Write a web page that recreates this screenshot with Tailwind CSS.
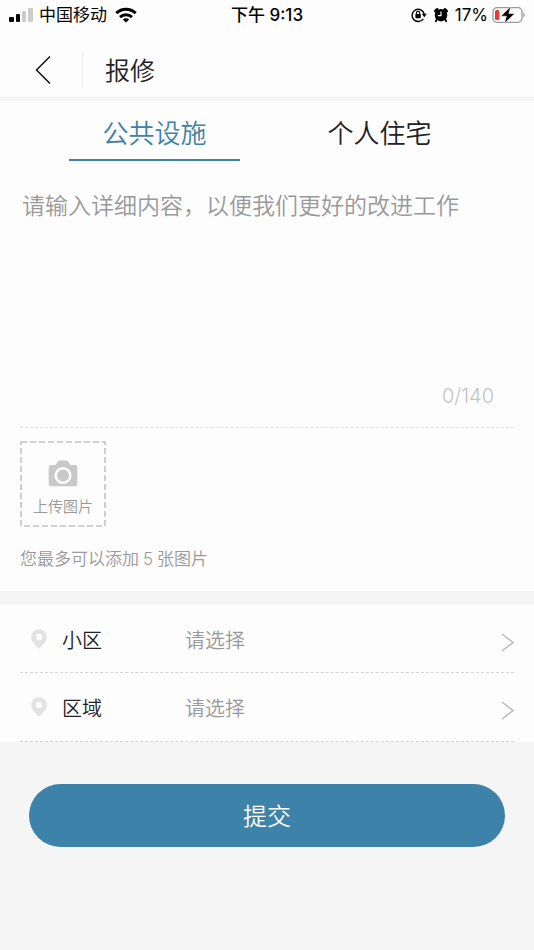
<!DOCTYPE html>
<html lang="zh-CN">
<head>
    <meta charset="UTF-8">
    <meta name="viewport" content="width=device-width, initial-scale=1.0">
    <script src="https://cdn.jsdelivr.net/npm/@tailwindcss/browser@4"></script>
    <title>报修</title>
</head>
<body class="min-h-screen bg-[#f5f5f5] font-['Inter','Noto_Sans_CJK_SC',sans-serif] font-[350] text-[#222]">

    <!-- status bar -->
    <div class="grid grid-cols-[1fr_auto_1fr] items-center h-[30px] px-[9px] bg-[#fdfdfd] text-[17px] leading-[30px] font-normal text-black">
        <div class="flex items-center">
            <svg class="w-6 h-4 shrink-0" viewBox="0 0 24 16">
                <rect x="0" y="10" width="5" height="5" rx="1" fill="#000"/>
                <rect x="7" y="7" width="4" height="8" rx="1" fill="#000"/>
                <rect x="13" y="4" width="4" height="11" rx="1" fill="#ccc"/>
                <rect x="19" y="1" width="5" height="14" rx="1" fill="#ccc"/>
            </svg>
            <span class="ml-1.5">中国移动</span>
            <svg class="w-[22px] h-4 ml-2 shrink-0" viewBox="0 0 22 16" fill="none" stroke="#000" stroke-width="3">
                <path d="M1.3 6.2C6.8.9 15.2.9 20.7 6.2"/>
                <path d="M5 10.1C8.4 6.9 13.6 6.9 17 10.1"/>
                <path d="M11 15.6 7.8 12.5C9.6 10.9 12.4 10.9 14.2 12.5Z" fill="#000" stroke="none"/>
            </svg>
        </div>
        <span class="font-medium">下午 9:13</span>
        <div class="flex items-center justify-end">
            <svg class="w-4 h-4 shrink-0" viewBox="0 0 16 16">
                <path d="M12.3 11.8A6.1 6.1 0 1 1 13.2 7" fill="none" stroke="#000" stroke-width="1.4"/>
                <path d="M10.8 6.8H15.8L13.3 10.2Z"/>
                <rect x="4.4" y="7" width="5.4" height="4.2" rx=".6"/>
                <path d="M5.5 7.4V6A1.6 1.6 0 0 1 8.7 6V7.4" fill="none" stroke="#000" stroke-width="1.1"/>
            </svg>
            <svg class="w-4 h-4 ml-1.5 shrink-0" viewBox="0 0 16 16">
                <circle cx="8" cy="8.2" r="6.2"/>
                <path d="M2.4 4 4.2 2.4M13.6 4 11.8 2.4" stroke="#000" stroke-width="2.8" stroke-linecap="round"/>
                <path d="M3.8 12.5 2.8 14.2M12.2 12.5 13.2 14.2" stroke="#000" stroke-width="1.8" stroke-linecap="round"/>
                <path d="M8 4.6V8.6H4.8" fill="none" stroke="#fff" stroke-width="1.2"/>
            </svg>
            <span class="ml-1.5">17%</span>
            <svg class="w-[33px] h-[18px] ml-1 shrink-0" viewBox="0 0 33 18">
                <rect x="1" y="1.7" width="29" height="14.6" rx="4" fill="#fff" stroke="#999" stroke-width="1.3"/>
                <path d="M31.4 6.5C33.2 7 33.2 11 31.4 11.5Z" fill="#999"/>
                <rect x="3" y="4" width="4.4" height="10" rx="1.6" fill="#e8392f"/>
                <path d="M18.8.6 8.8 10.2H14.4L12.4 17.4 22.8 7.6H16.8Z" stroke="#fff" stroke-width=".6"/>
            </svg>
        </div>
    </div>

    <header class="flex items-center h-[67px] pt-3 bg-[#fdfdfd]">
        <button class="flex w-[82px] justify-center pl-1" type="button" aria-label="返回">
            <svg class="w-4 h-7" viewBox="0 0 16 28" fill="none" stroke="#111" stroke-width="1.5">
                <path d="M15 .5 1.5 14 15 27.5"/>
            </svg>
        </button>
        <div class="w-px h-9 bg-[#ececec]"></div>
        <h1 class="pt-0.5 ml-[22px] text-[25px] leading-9">报修</h1>
    </header>

    <main class="border-t-4 border-[#f5f5f5]">
        <form id="repairForm">
            <section class="bg-[#fdfdfd] pb-5">
                <div class="grid grid-cols-2 px-[42px]" role="tablist">
                    <button class="tab mx-[27px] h-[60px] pt-1.5 border-b-2 border-[#3d82a8] text-[26px] text-[#3d82a8]" type="button" role="tab" aria-selected="true">公共设施</button>
                    <button class="tab mx-[27px] h-[60px] pt-1.5 border-b-2 border-transparent text-[26px] text-[#222]" type="button" role="tab" aria-selected="false">个人住宅</button>
                </div>

                <div class="mx-5 pt-[29px] pb-4 border-b border-dashed border-[#e2e2e2]">
                    <textarea class="block w-full h-[191px] px-0.5 resize-none outline-none text-[23px] leading-8 placeholder:text-[#999]" id="content" maxlength="140" aria-label="详细内容" placeholder="请输入详细内容，以便我们更好的改进工作"></textarea>
                    <div class="pr-5 text-right text-xl leading-[30px] text-[#c4c4c4]" id="count">0/140</div>
                </div>

                <div class="px-5 pt-[13px]">
                    <label class="relative flex flex-col items-center w-[86px] h-[86px] pt-[19px] text-[#999] cursor-pointer">
                        <svg class="absolute inset-0 w-full h-full" viewBox="0 0 86 86" fill="none" stroke="#c4c4c4" stroke-width="1.6" stroke-dasharray="6 3">
                            <rect x="1" y="1" width="84" height="84"/>
                        </svg>
                        <svg class="w-[30px] h-[27px]" viewBox="0 0 30 27">
                            <path d="M3 5H7.5L9.5 2Q10.5.6 12 .6H18Q19.5.6 20.5 2L22.5 5H27Q29.3 5 29.3 7.3V24Q29.3 26.3 27 26.3H3Q.7 26.3.7 24V7.3Q.7 5 3 5Z" fill="#c8c8c8"/>
                            <circle cx="15" cy="15.5" r="7.3" fill="none" stroke="#fdfdfd" stroke-width="2.6"/>
                        </svg>
                        <span class="mt-2 text-[15px] leading-6">上传图片</span>
                        <input class="sr-only" type="file" id="photos" accept="image/*" multiple>
                    </label>
                    <p class="mt-5 text-[17px] leading-6 text-[#999]">您最多可以添加<span class="px-1">5</span>张图片</p>
                </div>
            </section>

            <section class="mt-3.5 px-5 bg-[#fdfdfd]">
                <div class="relative flex items-center h-[68px] border-b border-dashed border-[#d4d4d4]">
                    <svg class="w-4 h-5 ml-[11px] shrink-0" viewBox="0 0 16 20">
                        <path d="M8 .2A7.8 7.8 0 0 0 .2 8C.2 12.3 4 15.5 8 19.8 12 15.5 15.8 12.3 15.8 8A7.8 7.8 0 0 0 8 .2ZM8 4.8A3.2 3.2 0 1 1 8 11.2 3.2 3.2 0 0 1 8 4.8Z" fill="#e2e2e2" fill-rule="evenodd"/>
                    </svg>
                    <label class="w-[123px] pt-1 ml-[15px] text-xl shrink-0" for="community">小区</label>
                    <select class="flex-1 h-full pt-1 appearance-none outline-none text-xl text-[#999]" id="community">
                        <option>请选择</option>
                    </select>
                    <svg class="absolute right-0 top-7 w-[13px] h-[19px] pointer-events-none" viewBox="0 0 13 19" fill="none" stroke="#bbb" stroke-width="1.5">
                        <path d="M1 1 12 9.5 1 18"/>
                    </svg>
                </div>
                <div class="relative flex items-center h-[69px] border-b border-dashed border-[#d4d4d4]">
                    <svg class="w-4 h-5 ml-[11px] shrink-0" viewBox="0 0 16 20">
                        <path d="M8 .2A7.8 7.8 0 0 0 .2 8C.2 12.3 4 15.5 8 19.8 12 15.5 15.8 12.3 15.8 8A7.8 7.8 0 0 0 8 .2ZM8 4.8A3.2 3.2 0 1 1 8 11.2 3.2 3.2 0 0 1 8 4.8Z" fill="#e2e2e2" fill-rule="evenodd"/>
                    </svg>
                    <label class="w-[123px] pt-1 ml-[15px] text-xl shrink-0" for="area">区域</label>
                    <select class="flex-1 h-full pt-1 appearance-none outline-none text-xl text-[#999]" id="area">
                        <option>请选择</option>
                    </select>
                    <svg class="absolute right-0 top-7 w-[13px] h-[19px] pointer-events-none" viewBox="0 0 13 19" fill="none" stroke="#bbb" stroke-width="1.5">
                        <path d="M1 1 12 9.5 1 18"/>
                    </svg>
                </div>
            </section>

            <div class="px-[29px] pt-[42px] pb-10">
                <button class="block w-full h-[63px] pt-0.5 rounded-full bg-[#3d82a8] text-2xl text-white" type="submit">提交</button>
            </div>
        </form>
    </main>

</body>

<script>
    const content = document.getElementById('content');
    const count = document.getElementById('count');
    const tabs = document.querySelectorAll('.tab');

    content.addEventListener('input', () => {
        count.textContent = `${content.value.length}/140`;
    });

    tabs.forEach((tab) => {
        tab.addEventListener('click', () => {
            tabs.forEach((t) => {
                const active = t === tab;
                t.setAttribute('aria-selected', active);
                t.classList.toggle('border-[#3d82a8]', active);
                t.classList.toggle('text-[#3d82a8]', active);
                t.classList.toggle('border-transparent', !active);
                t.classList.toggle('text-[#222]', !active);
            });
        });
    });

    document.getElementById('repairForm').addEventListener('submit', (e) => {
        e.preventDefault();
    });
</script>
</html>
